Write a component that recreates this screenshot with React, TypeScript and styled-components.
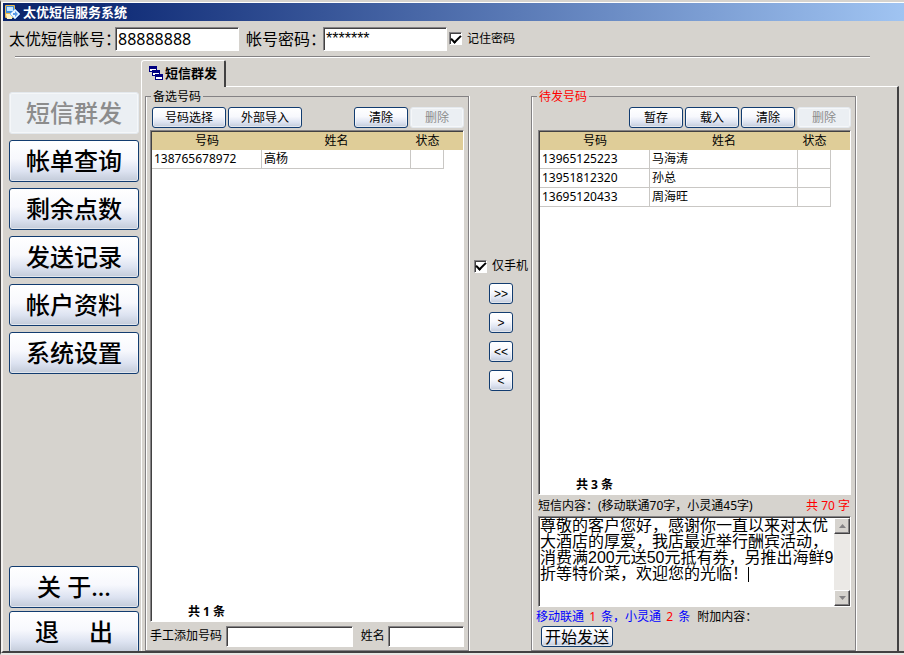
import React, { useState } from 'react';
import styled, { createGlobalStyle, css } from 'styled-components';

const FACE = '#d6d3ce';
const SHADOW = '#848284';
const DARK = '#424142';

const sunken = css`
  border: 1px solid;
  border-color: ${SHADOW} #fff #fff ${SHADOW};
  box-shadow: inset 1px 1px 0 ${DARK};
`;

const Global = createGlobalStyle`
  * { box-sizing: border-box; }
  html, body { margin: 0; background: ${FACE}; }
  body, button, input, textarea {
    font-family: "Noto Sans", "Noto Sans CJK SC", sans-serif;
    font-size: 12px;
    line-height: 16px;
    color: #000;
  }
`;

const Window = styled.div`
  display: flex;
  flex-direction: column;
  height: 100vh;
  min-height: 600px;
  overflow: hidden;
  background: ${FACE};
  border-top: 2px solid #d6d3ce;
  border-bottom: 2px solid #e8e6e3;
  border-left: 1px solid ${DARK};
`;

const Frame = styled.div`
  flex: 1;
  min-height: 0;
  display: flex;
  flex-direction: column;
  border-top: 1px solid #fff;
  border-left: 2px solid #f4f2f0;
  border-bottom: 2px solid ${DARK};
`;

const TitleBar = styled.header`
  display: flex;
  align-items: center;
  gap: 3px;
  height: 18px;
  flex: none;
  padding-left: 2px;
  color: #fff;
  background: linear-gradient(90deg, #0b246a 0%, #14307a 14%, #a0c4f2 100%);
`;

const TitleText = styled.h1`
  margin: 0;
  font-size: 13px;
  font-weight: 700;
  line-height: 16px;
`;

const LoginBar = styled.form`
  display: flex;
  align-items: center;
  flex: none;
  height: 35px;
  padding-left: 6px;
`;

const LoginLabel = styled.label<{ $width: number }>`
  flex: none;
  width: ${p => p.$width}px;
  font-size: 16px;
  line-height: 24px;
  white-space: nowrap;
`;

const LoginInput = styled.input`
  ${sunken}
  width: 124px;
  height: 24px;
  margin-right: 7px;
  padding: 0 2px;
  border-radius: 0;
  background: #fff;
  font-size: 16px;
  outline: none;
`;

const PasswordInput = styled(LoginInput)`
  margin-right: 2px;
  font-family: "Liberation Sans", sans-serif;
`;

const TickLabel = styled.label`
  display: flex;
  align-items: center;
  gap: 5px;
  white-space: nowrap;
`;

const Tick = styled.input`
  ${sunken}
  appearance: none;
  display: grid;
  place-items: center;
  width: 13px;
  height: 13px;
  margin: 0;
  background: #fff;
  &:checked::after {
    content: '';
    width: 8px;
    height: 4px;
    margin: 0 0 2px 1px;
    border: solid #000;
    border-width: 0 0 2px 2px;
    rotate: -45deg;
  }
`;

const Rule = styled.hr`
  flex: none;
  margin: 0 34px 0 12px;
  border: 0;
  border-top: 1px solid ${SHADOW};
  border-bottom: 1px solid #fff;
`;

const Main = styled.div`
  flex: 1;
  min-height: 0;
  display: flex;
  gap: 2px;
  padding-left: 6px;
`;

const Sidebar = styled.nav`
  flex: none;
  display: flex;
  flex-direction: column;
  gap: 6px;
  width: 130px;
  padding-top: 34px;
  overflow: hidden;
`;

const xp = css`
  border: 1px solid #123c70;
  border-radius: 3px;
  color: #000;
  background: linear-gradient(180deg, #fff 0%, #f7f8fd 45%, #dde3f1 75%, #c3cbd9 100%);
  box-shadow: inset 0 0 0 1px #ffffff80;
  white-space: pre;
  cursor: pointer;
  &:disabled {
    color: #8c8c8c;
    border-color: #e4e9ee;
    background: #ebeff3;
    cursor: default;
  }
`;

const NavButton = styled.button`
  ${xp}
  flex: none;
  height: 42px;
  padding: 0;
  font-size: 24px;
  line-height: 36px;
  font-weight: 500;
`;

const NavBottom = styled.div`
  display: flex;
  flex-direction: column;
  gap: 3px;
  margin-top: auto;
  margin-bottom: -2px;
`;

const Tabs = styled.div`
  flex: 1;
  min-width: 0;
  display: flex;
  flex-direction: column;
  padding: 2px 5px 0 0;
`;

const Tab = styled.button`
  flex: none;
  display: flex;
  align-items: center;
  align-self: flex-start;
  gap: 2px;
  height: 27px;
  margin-bottom: -1px;
  padding: 0 7px 2px;
  z-index: 1;
  border: solid;
  border-width: 1px 2px 0 1px;
  border-color: #fff ${DARK} #fff #fff;
  border-radius: 3px 2px 0 0;
  background: ${FACE};
  font-size: 13px;
  font-weight: 700;
`;

const TabPanel = styled.section`
  flex: 1;
  min-height: 0;
  display: grid;
  grid-template-columns: 324fr 62px 325fr 41px;
  padding: 3px 0 0 3px;
  border: solid;
  border-width: 1px 2px 0 1px;
  border-color: #fff ${DARK} #fff #fff;
`;

const Group = styled.fieldset<{ $inset: number }>`
  display: flex;
  flex-direction: column;
  min-width: 0;
  min-height: 0;
  margin: 0;
  padding: 0 4px 2px ${p => p.$inset}px;
  border: 1px solid ${SHADOW};
  box-shadow: 1px 0 0 #fff, inset 1px 0 0 #fff;
`;

const Legend = styled.legend<{ $red?: boolean }>`
  height: 13px;
  margin-left: ${p => (p.$red ? -1 : 1)}px;
  padding: 0 2px;
  line-height: 13px;
  color: ${p => (p.$red ? '#f00' : '#000')};
`;

const Toolbar = styled.div`
  flex: none;
  display: flex;
  gap: 2px;
  height: 27px;
  padding: 4px 0 2px 2px;
`;

const Spacer = styled.span`
  flex: 1;
`;

const ToolButton = styled.button<{ $wide?: boolean }>`
  ${xp}
  width: ${p => (p.$wide ? 74 : 54)}px;
  height: 21px;
  padding: 0;
`;

const ListBox = styled.div`
  ${sunken}
  flex: 1;
  min-height: 0;
  display: flex;
  flex-direction: column;
  padding: 1px 0 0 1px;
  background: #fff;
`;

const Table = styled.table`
  width: 100%;
  table-layout: fixed;
  border-collapse: separate;
  border-spacing: 0;
  th {
    height: 18px;
    padding: 0;
    background: #dfcd98;
    font-weight: 400;
  }
  td {
    height: 19px;
    padding: 0 2px;
    border: solid #c9c7c4;
    border-width: 0 1px 1px 0;
    white-space: nowrap;
  }
  td:last-child { border: 0; }
`;

const Total = styled.p`
  margin: auto 0 0;
  padding: 0 0 1px 36px;
  font-weight: 700;
`;

const AddRow = styled.div`
  flex: none;
  display: flex;
  align-items: center;
  height: 26px;
  padding-top: 2px;
`;

const AddLabel = styled.label<{ $width: number }>`
  flex: none;
  width: ${p => p.$width}px;
  white-space: nowrap;
`;

const SmallInput = styled.input<{ $grow: number }>`
  ${sunken}
  flex: ${p => p.$grow} 1 0;
  min-width: 0;
  width: 0;
  height: 21px;
  padding: 0 2px;
  border-radius: 0;
  background: #fff;
`;

const Transfer = styled.div`
  display: flex;
  flex-direction: column;
  align-items: center;
  gap: 8px;
  padding: 168px 0 0 2px;
`;

const OnlyMobile = styled(TickLabel)`
  margin-bottom: 1px;
`;

const MoveButton = styled.button`
  ${xp}
  width: 24px;
  height: 21px;
  padding: 0;
  font-family: "Liberation Sans", sans-serif;
`;

const Caption = styled.div`
  flex: none;
  display: flex;
  justify-content: space-between;
  height: 21px;
  padding: 3px 1px 0 0;
  white-space: nowrap;
`;

const Red = styled.span`
  color: #f00;
`;

const Blue = styled.span`
  color: #00f;
`;

const Count = styled(Red)`
  padding: 0 2px;
`;

const Editor = styled.div`
  ${sunken}
  position: relative;
  flex: none;
  display: flex;
  height: 91px;
  padding: 1px 0 0 1px;
  background: #fff;
`;

const Message = styled.textarea`
  flex: 1;
  min-width: 0;
  padding: 0;
  border: 0;
  outline: 0;
  resize: none;
  overflow: hidden;
  background: transparent;
  font-family: "Liberation Sans", "Noto Sans CJK SC", sans-serif;
  font-size: 16px;
  line-height: 16px;
`;

const Caret = styled.span`
  position: absolute;
  left: 209px;
  top: 50px;
  width: 1px;
  height: 15px;
  background: #000;
`;

const ScrollBar = styled.div`
  display: flex;
  flex-direction: column;
  justify-content: space-between;
  width: 16px;
  background: #ebe9e6;
`;

const ScrollButton = styled.button`
  display: grid;
  place-items: center;
  width: 16px;
  height: 16px;
  padding: 0;
  border: 1px solid;
  border-color: #fff ${DARK} ${DARK} #fff;
  box-shadow: inset -1px -1px 0 ${SHADOW};
  background: ${FACE};
`;

const Status = styled.div`
  flex: none;
  display: flex;
  gap: 7px;
  height: 19px;
  margin-left: -2px;
  padding-top: 2px;
  white-space: nowrap;
`;

const SendButton = styled.button`
  ${xp}
  flex: none;
  align-self: flex-start;
  width: 72px;
  height: 21px;
  margin: 0 0 1px 3px;
  padding: 0;
  font-size: 16px;
  line-height: 18px;
`;

const AppIcon = () => (
  <svg width="15" height="15" viewBox="0 0 15 15" aria-hidden="true">
    <rect x="0" y="0" width="10" height="13" rx="1" fill="#e9b84c" />
    <rect x="1" y="1" width="8" height="7" fill="#3f8fe0" />
    <rect x="2" y="2" width="6" height="4" fill="#c8e6ff" />
    <path d="M1 9h6v5H2z" fill="#fff3c4" />
    <path d="M10 4l5 5-5 5-5-5z" fill="#eef7ff" stroke="#8fbcf0" />
    <path d="M8 8h2V6l3 3-3 3v-2H8z" fill="#5b9be6" />
  </svg>
);

const WindowsIcon = () => (
  <svg width="14" height="14" viewBox="0 0 14 14" shapeRendering="crispEdges" aria-hidden="true">
    {[[0, 0], [3, 4], [6, 8]].map(([x, y]) => (
      <g key={x}>
        <rect x={x} y={y} width="8" height="6" fill="#000080" />
        <rect x={x + 1} y={y + 3} width="6" height="2" fill="#fff" />
      </g>
    ))}
  </svg>
);

const Arrow = ({ down }: { down?: boolean }) => (
  <svg width="7" height="4" viewBox="0 0 7 4" aria-hidden="true">
    <path d={down ? 'M0 0h7L3.5 4z' : 'M0 4h7L3.5 0z'} fill="#848284" />
  </svg>
);

function NumberTable({ rows }: { rows: string[][] }) {
  return (
    <Table>
      <colgroup>
        <col width="110" />
        <col />
        <col width="33" />
        <col width="19" />
      </colgroup>
      <thead>
        <tr><th>号码</th><th>姓名</th><th>状态</th><th /></tr>
      </thead>
      <tbody>
        {rows.map(([number, name]) => (
          <tr key={number}><td>{number}</td><td>{name}</td><td /><td /></tr>
        ))}
      </tbody>
    </Table>
  );
}

const navItems = ['短信群发', '帐单查询', '剩余点数', '发送记录', '帐户资料', '系统设置'];

export default function App() {
  const [message, setMessage] = useState(
    '尊敬的客户您好，感谢你一直以来对太优大酒店的厚爱，我店最近举行酬宾活动，消费满200元送50元抵有券，另推出海鲜9折等特价菜，欢迎您的光临！',
  );
  return (
    <Window>
      <Global />
      <Frame>
        <TitleBar><AppIcon /><TitleText>太优短信服务系统</TitleText></TitleBar>
        <LoginBar>
          <LoginLabel htmlFor="account" $width={106}>太优短信帐号：</LoginLabel>
          <LoginInput id="account" defaultValue="88888888" />
          <LoginLabel htmlFor="password" $width={77}>帐号密码：</LoginLabel>
          <PasswordInput id="password" defaultValue="*******" />
          <TickLabel><Tick type="checkbox" defaultChecked />记住密码</TickLabel>
        </LoginBar>
        <Rule />
        <Main>
          <Sidebar>
            {navItems.map((item, i) => (
              <NavButton key={item} type="button" disabled={i === 0}>{item}</NavButton>
            ))}
            <NavBottom>
              <NavButton type="button">关 于...</NavButton>
              <NavButton type="button">{'退\u3000 出'}</NavButton>
            </NavBottom>
          </Sidebar>
          <Tabs>
            <Tab type="button"><WindowsIcon />短信群发</Tab>
            <TabPanel>
              <Group $inset={4}>
                <Legend>备选号码</Legend>
                <Toolbar>
                  <ToolButton type="button" $wide>号码选择</ToolButton>
                  <ToolButton type="button" $wide>外部导入</ToolButton>
                  <Spacer />
                  <ToolButton type="button">清除</ToolButton>
                  <ToolButton type="button" disabled>删除</ToolButton>
                </Toolbar>
                <ListBox>
                  <NumberTable rows={[['138765678972', '高杨']]} />
                  <Total>共 1 条</Total>
                </ListBox>
                <AddRow>
                  <AddLabel htmlFor="new-number" $width={76}>手工添加号码</AddLabel>
                  <SmallInput id="new-number" $grow={129} />
                  <Spacer as={Gap} />
                  <AddLabel htmlFor="new-name" $width={27}>姓名</AddLabel>
                  <SmallInput id="new-name" $grow={75} />
                </AddRow>
              </Group>
              <Transfer>
                <OnlyMobile><Tick type="checkbox" defaultChecked />仅手机</OnlyMobile>
                {['>>', '>', '<<', '<'].map(sign => (
                  <MoveButton key={sign} type="button">{sign}</MoveButton>
                ))}
              </Transfer>
              <Group $inset={6}>
                <Legend $red>待发号码</Legend>
                <Toolbar>
                  <Spacer />
                  <ToolButton type="button">暂存</ToolButton>
                  <ToolButton type="button">载入</ToolButton>
                  <ToolButton type="button">清除</ToolButton>
                  <ToolButton type="button" disabled>删除</ToolButton>
                </Toolbar>
                <ListBox>
                  <NumberTable
                    rows={[['13965125223', '马海涛'], ['13951812320', '孙总'], ['13695120433', '周海旺']]}
                  />
                  <Total>共 3 条</Total>
                </ListBox>
                <Caption>
                  <label htmlFor="message">短信内容：(移动联通70字，小灵通45字)</label>
                  <Red>共 70 字</Red>
                </Caption>
                <Editor>
                  <Message id="message" value={message} onChange={e => setMessage(e.target.value)} />
                  <Caret />
                  <ScrollBar>
                    <ScrollButton type="button" aria-label="向上"><Arrow /></ScrollButton>
                    <ScrollButton type="button" aria-label="向下"><Arrow down /></ScrollButton>
                  </ScrollBar>
                </Editor>
                <Status>
                  <Blue>移动联通 <Count>1</Count> 条，小灵通<Count> 2 </Count>条</Blue>
                  <span>附加内容：</span>
                </Status>
                <SendButton type="button">开始发送</SendButton>
              </Group>
            </TabPanel>
          </Tabs>
        </Main>
      </Frame>
    </Window>
  );
}

const Gap = styled.span`
  flex: none;
  width: 8px;
`;
